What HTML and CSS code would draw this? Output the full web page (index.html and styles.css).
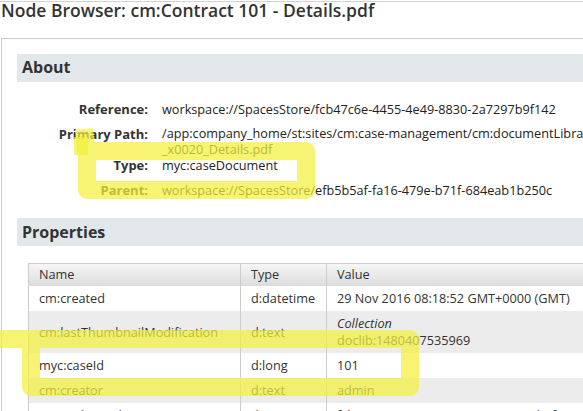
FILE: index.html
```html
<!DOCTYPE html>
<html>
<head>
<meta charset="utf-8">
<title>Node Browser</title>
<link rel="stylesheet" href="styles.css">
</head>
<body>
<div class="page">
  <h1 class="title">Node Browser: cm:Contract 101 - Details.pdf</h1>
  <div class="panel">
    <h2 class="bar">About</h2>
    <div class="about">
      <div class="label">Reference:</div>
      <div class="value">workspace://SpacesStore/fcb47c6e-4455-4e49-8830-2a7297b9f142</div>
      <div class="label">Primary Path:</div>
      <div class="value value-path">/app:company_home/st:sites/cm:case-management/cm:documentLibrary/cm:Contract_x0020_101_x0020_-<br>_x0020_Details.pdf</div>
      <div class="label">Type:</div>
      <div class="value">myc:caseDocument</div>
      <div class="label">Parent:</div>
      <div class="value">workspace://SpacesStore/efb5b5af-fa16-479e-b71f-684eab1b250c</div>
    </div>
    <h2 class="bar bar-props">Properties</h2>
    <table class="props">
      <thead>
        <tr><th class="c-name">Name</th><th class="c-type">Type</th><th class="c-value">Value</th></tr>
      </thead>
      <tbody>
        <tr><td>cm:created</td><td>d:datetime</td><td>29 Nov 2016 08:18:52 GMT+0000 (GMT)</td></tr>
        <tr><td>cm:lastThumbnailModification</td><td>d:text</td><td><em>Collection</em><br>doclib:1480407535969</td></tr>
        <tr><td>myc:caseId</td><td>d:long</td><td>101</td></tr>
        <tr><td>cm:creator</td><td>d:text</td><td>admin</td></tr>
        <tr><td>sys:node-uuid</td><td>d:text</td><td>fcb47c6e-4455-4e49-8830-2a7297b9f142</td></tr>
      </tbody>
    </table>
  </div>
</div>
<svg class="marker" width="583" height="411" viewBox="0 0 583 411" xmlns="http://www.w3.org/2000/svg">
  <path d="M 84 129 L 86 151 L 306 151 L 306 190 L 87 190 L 87 151" />
  <path d="M 74 146 L 88 146" />
  <path d="M -10 339 L 410 339 L 410 387 L 31 387 L 31 345" />
</svg>
</body>
</html>
```

FILE: styles.css
```css
html, body {
  margin: 0;
  padding: 0;
  overflow: hidden;
}

body {
  width: 583px;
  height: 411px;
  position: relative;
  background: #ffffff;
  color: #333333;
  font-family: "Open Sans", "Liberation Sans", sans-serif;
}

.page {
  margin-top: 1px;
  border-top: 1px solid #d2d2d2;
}

.title {
  margin: 0;
  padding-left: 1px;
  font-size: 17.5px;
  font-weight: 600;
  line-height: 16px;
  color: #333333;
  white-space: nowrap;
}

.panel {
  margin: 20px 0 0 1px;
  width: 720px;
  border: 1px solid #cccccc;
  border-right: none;
  padding: 15px;
}

.bar {
  margin: 0;
  background: #e2e8ea;
  font-size: 16px;
  font-weight: 700;
  line-height: 20px;
  padding: 3px 5px 5px;
  color: #333333;
}

.bar-props {
  margin-top: 11px;
  padding: 4px 5px 4px;
}

.about {
  display: grid;
  grid-template-columns: 131px 1fr;
  grid-template-rows: 25px 31px 25px 25px;
  column-gap: 14px;
  margin-top: 19px;
  font-size: 13px;
  line-height: 16px;
}

.label {
  text-align: right;
  font-weight: 700;
  color: #333333;
  white-space: nowrap;
}

.value {
  font-size: 12.7px;
  color: #222222;
  white-space: nowrap;
}

.value-path {
  line-height: 15.5px;
}

.props {
  margin: 17px 0 0 11px;
  border-collapse: separate;
  border-spacing: 0;
  border: 1px solid #cccccc;
  width: 640px;
  font-size: 12.7px;
  line-height: 17px;
  color: #333333;
}

.props th,
.props td {
  text-align: left;
  padding: 4px 10px;
  border-left: 1px solid #cccccc;
  white-space: nowrap;
  vertical-align: middle;
  box-sizing: border-box;
}

.props th:first-child,
.props td:first-child {
  border-left: none;
}

.props th {
  font-weight: 400;
  padding: 2px 10px 3px;
  background: linear-gradient(#f6f6f6, #dcdcdc);
}

.c-name { width: 211px; }
.c-type { width: 86px; }

.props tbody tr:nth-child(even) td {
  background: #ececec;
}

.props em {
  font-style: italic;
}

.marker {
  position: absolute;
  left: 0;
  top: 0;
  pointer-events: none;
  fill: none;
  stroke: rgb(242, 240, 60);
  stroke-opacity: 0.72;
  stroke-width: 18;
  stroke-linejoin: round;
  stroke-linecap: butt;
}
```
